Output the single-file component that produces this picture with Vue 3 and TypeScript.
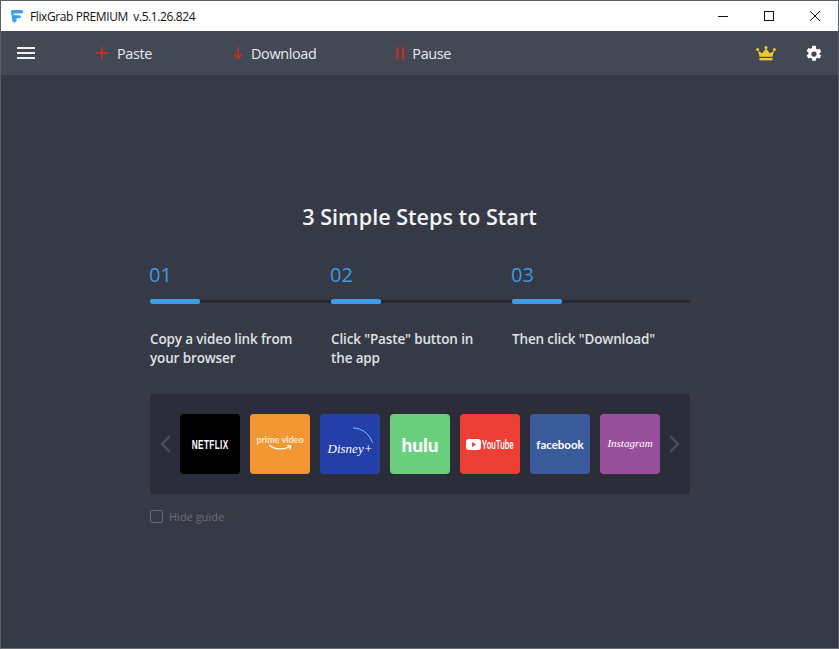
<script setup lang="ts">
const steps = [
  { n: '01', text: 'Copy a video link from your browser' },
  { n: '02', text: 'Click "Paste" button in the app' },
  { n: '03', text: 'Then click "Download"' },
]
</script>

<template>
  <div class="win">
    <header class="titlebar">
      <svg class="logo" width="14" height="14" viewBox="0 0 14 14">
        <path d="M2.5 1H11.5a1.6 1.6 0 0 1 0 3.6H3.6V6.2H9.5a1.5 1.5 0 0 1 0 3H6.6V11a2.2 2.2 0 0 1-4.4.6 L1 2.5A1.4 1.4 0 0 1 2.5 1Z" fill="#3f9fe8" />
      </svg>
      <span class="wintitle">FlixGrab PREMIUM&nbsp; v.5.1.26.824</span>
      <div class="winbtns">
        <svg width="46" height="30" viewBox="0 0 46 30"><path d="M18 15.5H28" stroke="#111" fill="none" /></svg>
        <svg width="46" height="30" viewBox="0 0 46 30"><rect x="18.5" y="10.5" width="9" height="9" stroke="#111" fill="none" /></svg>
        <svg width="46" height="30" viewBox="0 0 46 30"><path d="M18 10L28 20M28 10L18 20" stroke="#111" fill="none" /></svg>
      </div>
    </header>

    <nav class="toolbar">
      <svg class="menu" width="18" height="14" viewBox="0 0 18 14"><path d="M0 2H18M0 7H18M0 12H18" stroke="#f1f2f4" stroke-width="2" fill="none" /></svg>
      <div class="tool paste">
        <svg width="12" height="12" viewBox="0 0 12 12"><path d="M6 0V12M0 6H12" stroke="#c0302b" stroke-width="2" fill="none" /></svg>
        <span>Paste</span>
      </div>
      <div class="tool download">
        <svg width="10" height="13" viewBox="0 0 10 13"><path d="M5 0V11.5M1 7.5L5 11.5L9 7.5" stroke="#c0302b" stroke-width="1.8" fill="none" /></svg>
        <span>Download</span>
      </div>
      <div class="tool pause">
        <svg width="9" height="13" viewBox="0 0 9 13"><path d="M1.5 0V13M7 0V13" stroke="#c0302b" stroke-width="2.2" fill="none" /></svg>
        <span>Pause</span>
      </div>
      <div class="spacer"></div>
      <svg class="crown" width="20" height="15" viewBox="0 0 20 15">
        <path d="M2 4.5L6 7.5L10 2.5L14 7.5L18 4.5L16.5 10.8H3.5Z" fill="#f2c62d" />
        <circle cx="1.6" cy="3.6" r="1.5" fill="#f2c62d" /><circle cx="10" cy="1.6" r="1.5" fill="#f2c62d" /><circle cx="18.4" cy="3.6" r="1.5" fill="#f2c62d" />
        <rect x="3.4" y="12" width="13.2" height="2.4" fill="#f2c62d" />
      </svg>
      <svg class="gear" width="18" height="18" viewBox="0 0 24 24">
        <path fill="#fff" fill-rule="evenodd" d="M19.4 13a7.6 7.6 0 0 0 0-2l2.4-1.9-2.4-4.2-2.9 1.2a7.5 7.5 0 0 0-1.7-1L14.4 1H9.6l-.4 3.1a7.5 7.5 0 0 0-1.7 1L4.6 3.9 2.2 8.1 4.6 10a7.6 7.6 0 0 0 0 2L2.2 13.9l2.4 4.2 2.9-1.2a7.5 7.5 0 0 0 1.7 1l.4 3.1h4.8l.4-3.1a7.5 7.5 0 0 0 1.7-1l2.9 1.2 2.4-4.2ZM12 15.5a3.5 3.5 0 1 1 0-7 3.5 3.5 0 0 1 0 7Z" />
      </svg>
    </nav>

    <main class="content">
      <h1>3 Simple Steps to Start</h1>
      <section class="steps">
        <div v-for="s in steps" :key="s.n" class="step">
          <div class="num">{{ s.n }}</div>
          <div class="bar"><div class="fill"></div></div>
          <p>{{ s.text }}</p>
        </div>
      </section>

      <section class="carousel">
        <svg class="arrow" width="11" height="18" viewBox="0 0 11 18"><path d="M10 1L2 9L10 17" stroke="#4a4f5c" stroke-width="2.4" fill="none" /></svg>
        <div class="tile netflix"><span>NETFLIX</span></div>
        <div class="tile prime">
          <span>prime video</span>
          <svg width="26" height="8" viewBox="0 0 26 8"><path d="M2 1C8 6 17 6 23 2.5M20 1.5L24 2L22.5 5.5" stroke="#fff" stroke-width="1.2" fill="none" /></svg>
        </div>
        <div class="tile disney">
          <svg class="arc" width="22" height="18" viewBox="0 0 22 18"><path d="M1 1C9 1 17 6 20.5 15.5" stroke="#6fc3f2" stroke-width="1" fill="none" /></svg>
          <span>Disney+</span>
        </div>
        <div class="tile hulu"><span>hulu</span></div>
        <div class="tile youtube">
          <svg width="15" height="11" viewBox="0 0 15 11"><rect width="15" height="11" rx="3" fill="#fff" /><path d="M6 3L10 5.5L6 8Z" fill="#ee3f36" /></svg>
          <span>YouTube</span>
        </div>
        <div class="tile facebook"><span>facebook</span></div>
        <div class="tile instagram"><span>Instagram</span></div>
        <svg class="arrow" width="11" height="18" viewBox="0 0 11 18"><path d="M1 1L9 9L1 17" stroke="#4a4f5c" stroke-width="2.4" fill="none" /></svg>
      </section>

      <label class="hide"><span class="box"></span>Hide guide</label>
    </main>
  </div>
</template>

<style>
html, body { margin: 0; padding: 0; background: #363a46; }
</style>

<style scoped>
.win {
  width: 839px;
  height: 649px;
  box-sizing: border-box;
  border: 1px solid #5a5d63;
  border-bottom-color: #6b6e75;
  display: flex;
  flex-direction: column;
  background: #363a46;
  font-family: "Open Sans", "Noto Sans", sans-serif;
  overflow: hidden;
}
.titlebar {
  height: 30px;
  flex: none;
  background: #fff;
  display: flex;
  align-items: center;
  padding-left: 9px;
}
.logo { margin-right: 6px; }
.wintitle { font-size: 12px; color: #111; letter-spacing: -0.4px; white-space: nowrap; }
.winbtns { margin-left: auto; display: flex; }
.winbtns svg { display: block; }
.toolbar {
  height: 44px;
  flex: none;
  background: #434855;
  display: flex;
  align-items: center;
  color: #e8e9ec;
  font-size: 14.4px;
}
.menu { margin-left: 16px; }
.tool { display: flex; align-items: center; }
.tool span { letter-spacing: -0.35px; }
.paste { margin-left: 61px; gap: 9px; }
.download { margin-left: 81px; gap: 8px; }
.pause { margin-left: 80px; gap: 7px; }
.spacer { flex: 1; }
.crown { margin-right: 29px; }
.gear { margin-right: 15px; margin-top: 1px; }
.content {
  flex: 1;
  display: flex;
  flex-direction: column;
  padding: 127px 149px 0;
}
h1 {
  margin: 0;
  font-size: 21.6px;
  font-weight: 600;
  line-height: 30px;
  color: #f2f3f5;
  text-align: center;
}
.steps {
  display: grid;
  grid-template-columns: repeat(3, 181px);
  margin-top: 30px;
}
.step:last-child { width: 178px; }
.num {
  font-size: 20px;
  line-height: 26px;
  color: #3d9be0;
  margin-bottom: 12px;
  margin-left: -1px;
}
.bar { height: 3px; background: #272a34; margin: 1px 0; position: relative; }
.fill {
  position: absolute;
  left: 0;
  top: -1px;
  width: 50px;
  height: 5px;
  border-radius: 2px;
  background: #3d9ce3;
}
.step p {
  margin: 27px 0 0;
  width: 165px;
  font-size: 13.5px;
  font-weight: 600;
  letter-spacing: -0.14px;
  line-height: 19px;
  color: #dfe1e5;
}
.carousel {
  margin-top: 26px;
  height: 100px;
  background: #2b2e3a;
  border-radius: 3px;
  display: flex;
  align-items: center;
  padding-left: 10px;
  gap: 10px;
  width: 540px;
  box-sizing: border-box;
}
.arrow { margin-right: -1px; flex: none; }
.arrow:last-child { margin-left: -1px; }
.tile {
  width: 60px;
  height: 60px;
  flex: none;
  border-radius: 4px;
  color: #fff;
  display: flex;
  align-items: center;
  justify-content: center;
  position: relative;
  font-family: "Liberation Sans", sans-serif;
  white-space: nowrap;
}
.netflix { background: #000; font-size: 13px; font-weight: 700; }
.netflix span { transform: scaleX(0.63); letter-spacing: 0.6px; }
.prime { background: #f29733; flex-direction: column; font-size: 9px; font-weight: 700; font-family: "Lato", sans-serif; gap: 0; }
.prime span { margin-top: -2px; color: #fde9cf; }
.prime svg { margin-top: -1px; }
.disney { background: #2440a8; font-family: "Liberation Serif", serif; font-style: italic; font-size: 13px; }
.disney span { margin-top: 9px; }
.arc { position: absolute; left: 32px; top: 13px; }
.hulu { background: #6bcf7f; font-size: 19px; font-weight: 900; font-family: "Lato", sans-serif; }
.youtube { background: #ee3f36; font-size: 13px; gap: 1px; font-family: "Roboto", sans-serif; }
.youtube span { display: inline-block; transform: scaleX(0.62); transform-origin: left; margin-right: -20px; font-weight: 500; }
.facebook { background: #3b5a9a; font-size: 11.5px; font-weight: 700; font-family: "Lato", sans-serif; }
.instagram { background: #98509c; font-size: 11px; font-family: "Liberation Serif", serif; font-style: italic; }
.instagram span { margin-top: -3px; }
.hide {
  margin-top: 15px;
  display: flex;
  align-items: center;
  gap: 6px;
  font-size: 11px;
  color: #686c78;
  line-height: 15px;
}
.box {
  width: 11px;
  height: 11px;
  border: 1px solid #686c78;
  border-radius: 2px;
}
</style>
